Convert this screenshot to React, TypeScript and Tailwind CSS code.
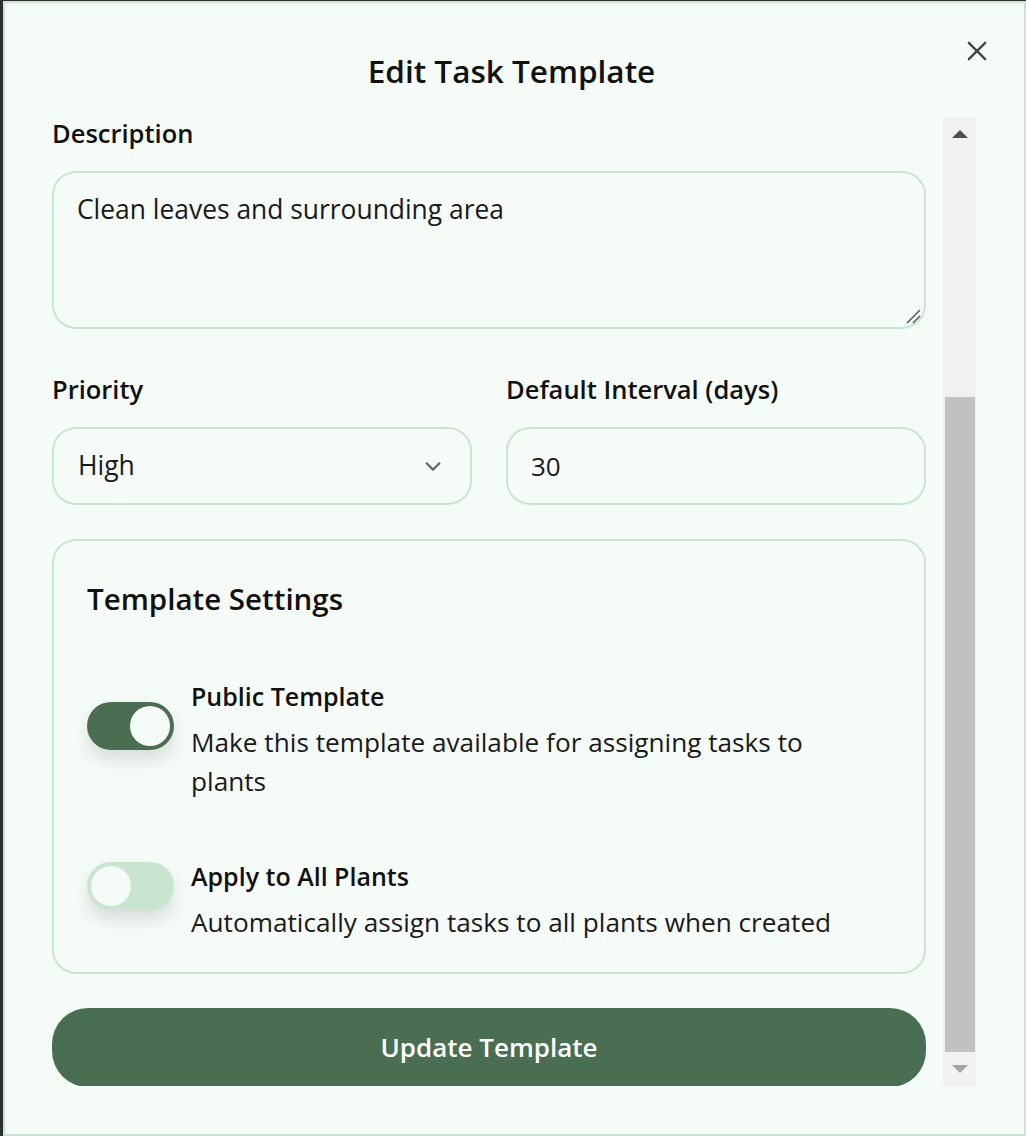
import { FC } from "react";

const font = { fontFamily: "'Open Sans', 'Noto Sans', sans-serif" };

const Toggle: FC<{ on: boolean }> = ({ on }) => (
    <div
        className={`relative w-[87px] h-[48px] rounded-full shrink-0 mb-[28px] shadow-[0_10px_18px_rgba(0,0,0,0.12)] ${on ? "bg-[#4a6e52]" : "bg-[#c8e6cf]"}`}
    >
        <div
            className={`absolute top-[4px] w-[40px] h-[40px] rounded-full bg-[#f5fbf7] ${on ? "left-[43px]" : "left-[4px]"}`}
        />
    </div>
);

const SettingRow: FC<{ on: boolean; title: string; desc: string }> = ({ on, title, desc }) => (
    <div className="flex items-center gap-[17px]">
        <Toggle on={on} />
        <div className="flex flex-col max-w-[670px]">
            <p className="text-[25px] font-semibold text-[#111] leading-[36px]">{title}</p>
            <p className="text-[26.2px] text-[#1a1a1a] leading-[39px] mt-[9px]">{desc}</p>
        </div>
    </div>
);

export default function App() {
    return (
        <div className="w-[1026px] h-[1136px] bg-[#2e2e2e] pl-[3px] pt-[1px]" style={font}>
            <div className="relative w-full h-full bg-[#f5fbf7] border-2 border-[#c8e6cf] flex flex-col">
                <button className="absolute right-[33px] top-[34px] text-[#444]">
                    <svg width="28" height="28" viewBox="0 0 24 24" fill="none" stroke="currentColor" strokeWidth="2" strokeLinecap="round">
                        <path d="M5 5l14 14M19 5L5 19" />
                    </svg>
                </button>

                <h2 className="text-center text-[31.5px] font-semibold text-[#111] mt-[46px] leading-[44px] pr-[6px]">
                    Edit Task Template
                </h2>

                <div className="flex mt-[24px] pl-[47px] pr-[48px] gap-[17px] flex-1 min-h-0 mb-[48px]">
                    {/* scrolled content */}
                    <div className="flex-1 flex flex-col overflow-hidden">
                        <label className="text-[25.5px] font-semibold text-[#111] leading-[32px]">Description</label>
                        <div className="mt-[22px] h-[158px] shrink-0 rounded-[24px] border-2 border-[#c8e6cf] px-[23px] py-[20px] relative">
                            <p className="text-[26.4px] text-[#1a1a1a] leading-[32px]">Clean leaves and surrounding area</p>
                            <svg className="absolute right-[2px] bottom-[2px]" width="18" height="18" viewBox="0 0 18 18" stroke="#555" strokeWidth="1.5">
                                <path d="M3 16L16 3M9 16L16 9" />
                            </svg>
                        </div>

                        <div className="grid grid-cols-2 gap-[34px] mt-[44px]">
                            <div className="flex flex-col">
                                <label className="text-[25.5px] font-semibold text-[#111] leading-[32px]">Priority</label>
                                <div className="mt-[22px] h-[78px] rounded-[24px] border-2 border-[#c8e6cf] pl-[24px] pr-[26px] flex items-center justify-between">
                                    <span className="text-[26.5px] text-[#1a1a1a]">High</span>
                                    <svg width="22" height="22" viewBox="0 0 24 24" fill="none" stroke="#6b6b6b" strokeWidth="2.5" strokeLinecap="round" strokeLinejoin="round">
                                        <path d="M5 9l7 7 7-7" />
                                    </svg>
                                </div>
                            </div>
                            <div className="flex flex-col">
                                <label className="text-[25.5px] font-semibold text-[#111] leading-[32px]">Default Interval (days)</label>
                                <div className="mt-[22px] h-[78px] rounded-[24px] border-2 border-[#c8e6cf] px-[23px] flex items-center">
                                    <span className="text-[26px] text-[#1a1a1a]">30</span>
                                </div>
                            </div>
                        </div>

                        <div className="mt-[34px] shrink-0 rounded-[24px] border-2 border-[#c8e6cf] pl-[33px] pr-[30px] pt-[38px] pb-[30px]">
                            <h3 className="text-[29.5px] font-semibold text-[#111] leading-[40px]">Template Settings</h3>
                            <div className="flex flex-col gap-[57px] mt-[59px]">
                                <SettingRow on title="Public Template" desc="Make this template available for assigning tasks to plants" />
                                <SettingRow on={false} title="Apply to All Plants" desc="Automatically assign tasks to all plants when created" />
                            </div>
                        </div>

                        <button className="mt-[34px] h-[79px] shrink-0 rounded-[36px] bg-[#4a6e52] text-white text-[26px] font-semibold">
                            Update Template
                        </button>
                    </div>

                    {/* scrollbar */}
                    <div className="w-[33px] bg-[#f1f1f1] flex flex-col items-center">
                        <div className="h-[34px] w-full flex items-center justify-center">
                            <div className="w-0 h-0 border-l-[8px] border-r-[8px] border-b-[8px] border-l-transparent border-r-transparent border-b-[#505050]" />
                        </div>
                        <div className="h-[246px]" />
                        <div className="w-[30px] flex-1 bg-[#c1c1c1]" />
                        <div className="h-[34px] w-full flex items-center justify-center">
                            <div className="w-0 h-0 border-l-[8px] border-r-[8px] border-t-[8px] border-l-transparent border-r-transparent border-t-[#a3a3a3]" />
                        </div>
                    </div>
                </div>
            </div>
        </div>
    );
}
